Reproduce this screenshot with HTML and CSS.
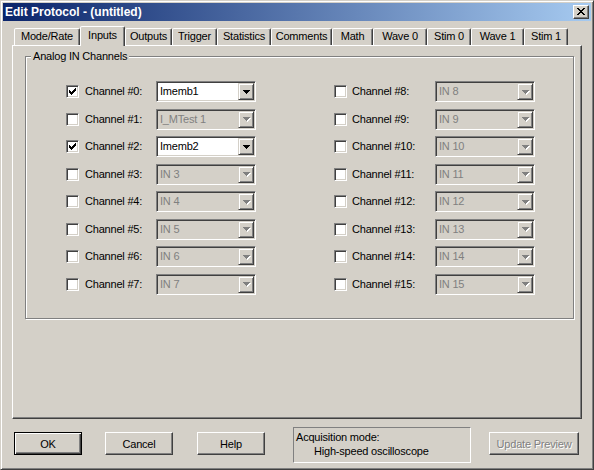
FILE: index.html
```html
<!DOCTYPE html>
<html>
<head>
<meta charset="utf-8">
<title>Edit Protocol</title>
<link rel="stylesheet" href="styles.css">
</head>
<body>
<div class="window">
  <div class="titlebar">
    <span class="title">Edit Protocol - (untitled)</span>
    <span class="close-btn"><svg width="8" height="7" viewBox="0 0 8 7" shape-rendering="crispEdges"><path d="M0 0h2v1h-2zM6 0h2v1h-2zM1 1h2v1h-2zM5 1h2v1h-2zM2 2h4v1h-4zM3 3h2v1h-2zM2 4h4v1h-4zM1 5h2v1h-2zM5 5h2v1h-2zM0 6h2v1h-2zM6 6h2v1h-2z" fill="#000"/></svg></span>
  </div>
  <div class="client">
    <div class="tabs">
      <div class="tab tab-mode">Mode/Rate</div>
      <div class="tab tab-inputs active">Inputs</div>
      <div class="tab tab-outputs">Outputs</div>
      <div class="tab tab-trigger">Trigger</div>
      <div class="tab tab-stats">Statistics</div>
      <div class="tab tab-comments">Comments</div>
      <div class="tab tab-math">Math</div>
      <div class="tab tab-wave0">Wave 0</div>
      <div class="tab tab-stim0">Stim 0</div>
      <div class="tab tab-wave1">Wave 1</div>
      <div class="tab tab-stim1">Stim 1</div>
    </div>
    <div class="panel">
      <div class="group">
        <div class="group-title">Analog IN Channels</div>
        <div class="channels">
          <div class="col col-left">
            <div class="row"><span class="cb"><svg width="7" height="7" viewBox="0 0 7 7" shape-rendering="crispEdges"><path d="M6 0h1v1h-1zM5 1h2v1h-2zM0 2h1v1h-1zM4 2h3v1h-3zM0 3h2v1h-2zM3 3h3v1h-3zM0 4h5v1h-5zM1 5h3v1h-3zM2 6h1v1h-1z" fill="#000"/></svg></span><span class="lbl">Channel #0:</span><span class="combo"><span class="combo-text">Imemb1</span><span class="combo-btn"><svg width="8" height="5" viewBox="0 0 8 5" shape-rendering="crispEdges"><path d="M0 0h7v1h-7zM1 1h5v1h-5zM2 2h3v1h-3zM3 3h1v1h-1z" fill="#000"/></svg></span></span></div>
            <div class="row"><span class="cb"></span><span class="lbl">Channel #1:</span><span class="combo disabled"><span class="combo-text">I_MTest 1</span><span class="combo-btn"><svg width="8" height="5" viewBox="0 0 8 5" shape-rendering="crispEdges"><path d="M1 1h7v1h-7zM2 2h5v1h-5zM3 3h3v1h-3zM4 4h1v1h-1z" fill="#fff"/><path d="M0 0h7v1h-7zM1 1h5v1h-5zM2 2h3v1h-3zM3 3h1v1h-1z" fill="#808080"/></svg></span></span></div>
            <div class="row"><span class="cb"><svg width="7" height="7" viewBox="0 0 7 7" shape-rendering="crispEdges"><path d="M6 0h1v1h-1zM5 1h2v1h-2zM0 2h1v1h-1zM4 2h3v1h-3zM0 3h2v1h-2zM3 3h3v1h-3zM0 4h5v1h-5zM1 5h3v1h-3zM2 6h1v1h-1z" fill="#000"/></svg></span><span class="lbl">Channel #2:</span><span class="combo"><span class="combo-text">Imemb2</span><span class="combo-btn"><svg width="8" height="5" viewBox="0 0 8 5" shape-rendering="crispEdges"><path d="M0 0h7v1h-7zM1 1h5v1h-5zM2 2h3v1h-3zM3 3h1v1h-1z" fill="#000"/></svg></span></span></div>
            <div class="row"><span class="cb"></span><span class="lbl">Channel #3:</span><span class="combo disabled"><span class="combo-text">IN 3</span><span class="combo-btn"><svg width="8" height="5" viewBox="0 0 8 5" shape-rendering="crispEdges"><path d="M1 1h7v1h-7zM2 2h5v1h-5zM3 3h3v1h-3zM4 4h1v1h-1z" fill="#fff"/><path d="M0 0h7v1h-7zM1 1h5v1h-5zM2 2h3v1h-3zM3 3h1v1h-1z" fill="#808080"/></svg></span></span></div>
            <div class="row"><span class="cb"></span><span class="lbl">Channel #4:</span><span class="combo disabled"><span class="combo-text">IN 4</span><span class="combo-btn"><svg width="8" height="5" viewBox="0 0 8 5" shape-rendering="crispEdges"><path d="M1 1h7v1h-7zM2 2h5v1h-5zM3 3h3v1h-3zM4 4h1v1h-1z" fill="#fff"/><path d="M0 0h7v1h-7zM1 1h5v1h-5zM2 2h3v1h-3zM3 3h1v1h-1z" fill="#808080"/></svg></span></span></div>
            <div class="row"><span class="cb"></span><span class="lbl">Channel #5:</span><span class="combo disabled"><span class="combo-text">IN 5</span><span class="combo-btn"><svg width="8" height="5" viewBox="0 0 8 5" shape-rendering="crispEdges"><path d="M1 1h7v1h-7zM2 2h5v1h-5zM3 3h3v1h-3zM4 4h1v1h-1z" fill="#fff"/><path d="M0 0h7v1h-7zM1 1h5v1h-5zM2 2h3v1h-3zM3 3h1v1h-1z" fill="#808080"/></svg></span></span></div>
            <div class="row"><span class="cb"></span><span class="lbl">Channel #6:</span><span class="combo disabled"><span class="combo-text">IN 6</span><span class="combo-btn"><svg width="8" height="5" viewBox="0 0 8 5" shape-rendering="crispEdges"><path d="M1 1h7v1h-7zM2 2h5v1h-5zM3 3h3v1h-3zM4 4h1v1h-1z" fill="#fff"/><path d="M0 0h7v1h-7zM1 1h5v1h-5zM2 2h3v1h-3zM3 3h1v1h-1z" fill="#808080"/></svg></span></span></div>
            <div class="row"><span class="cb"></span><span class="lbl">Channel #7:</span><span class="combo disabled"><span class="combo-text">IN 7</span><span class="combo-btn"><svg width="8" height="5" viewBox="0 0 8 5" shape-rendering="crispEdges"><path d="M1 1h7v1h-7zM2 2h5v1h-5zM3 3h3v1h-3zM4 4h1v1h-1z" fill="#fff"/><path d="M0 0h7v1h-7zM1 1h5v1h-5zM2 2h3v1h-3zM3 3h1v1h-1z" fill="#808080"/></svg></span></span></div>
          </div>
          <div class="col col-right">
            <div class="row"><span class="cb"></span><span class="lbl">Channel #8:</span><span class="combo disabled"><span class="combo-text">IN 8</span><span class="combo-btn"><svg width="8" height="5" viewBox="0 0 8 5" shape-rendering="crispEdges"><path d="M1 1h7v1h-7zM2 2h5v1h-5zM3 3h3v1h-3zM4 4h1v1h-1z" fill="#fff"/><path d="M0 0h7v1h-7zM1 1h5v1h-5zM2 2h3v1h-3zM3 3h1v1h-1z" fill="#808080"/></svg></span></span></div>
            <div class="row"><span class="cb"></span><span class="lbl">Channel #9:</span><span class="combo disabled"><span class="combo-text">IN 9</span><span class="combo-btn"><svg width="8" height="5" viewBox="0 0 8 5" shape-rendering="crispEdges"><path d="M1 1h7v1h-7zM2 2h5v1h-5zM3 3h3v1h-3zM4 4h1v1h-1z" fill="#fff"/><path d="M0 0h7v1h-7zM1 1h5v1h-5zM2 2h3v1h-3zM3 3h1v1h-1z" fill="#808080"/></svg></span></span></div>
            <div class="row"><span class="cb"></span><span class="lbl">Channel #10:</span><span class="combo disabled"><span class="combo-text">IN 10</span><span class="combo-btn"><svg width="8" height="5" viewBox="0 0 8 5" shape-rendering="crispEdges"><path d="M1 1h7v1h-7zM2 2h5v1h-5zM3 3h3v1h-3zM4 4h1v1h-1z" fill="#fff"/><path d="M0 0h7v1h-7zM1 1h5v1h-5zM2 2h3v1h-3zM3 3h1v1h-1z" fill="#808080"/></svg></span></span></div>
            <div class="row"><span class="cb"></span><span class="lbl">Channel #11:</span><span class="combo disabled"><span class="combo-text">IN 11</span><span class="combo-btn"><svg width="8" height="5" viewBox="0 0 8 5" shape-rendering="crispEdges"><path d="M1 1h7v1h-7zM2 2h5v1h-5zM3 3h3v1h-3zM4 4h1v1h-1z" fill="#fff"/><path d="M0 0h7v1h-7zM1 1h5v1h-5zM2 2h3v1h-3zM3 3h1v1h-1z" fill="#808080"/></svg></span></span></div>
            <div class="row"><span class="cb"></span><span class="lbl">Channel #12:</span><span class="combo disabled"><span class="combo-text">IN 12</span><span class="combo-btn"><svg width="8" height="5" viewBox="0 0 8 5" shape-rendering="crispEdges"><path d="M1 1h7v1h-7zM2 2h5v1h-5zM3 3h3v1h-3zM4 4h1v1h-1z" fill="#fff"/><path d="M0 0h7v1h-7zM1 1h5v1h-5zM2 2h3v1h-3zM3 3h1v1h-1z" fill="#808080"/></svg></span></span></div>
            <div class="row"><span class="cb"></span><span class="lbl">Channel #13:</span><span class="combo disabled"><span class="combo-text">IN 13</span><span class="combo-btn"><svg width="8" height="5" viewBox="0 0 8 5" shape-rendering="crispEdges"><path d="M1 1h7v1h-7zM2 2h5v1h-5zM3 3h3v1h-3zM4 4h1v1h-1z" fill="#fff"/><path d="M0 0h7v1h-7zM1 1h5v1h-5zM2 2h3v1h-3zM3 3h1v1h-1z" fill="#808080"/></svg></span></span></div>
            <div class="row"><span class="cb"></span><span class="lbl">Channel #14:</span><span class="combo disabled"><span class="combo-text">IN 14</span><span class="combo-btn"><svg width="8" height="5" viewBox="0 0 8 5" shape-rendering="crispEdges"><path d="M1 1h7v1h-7zM2 2h5v1h-5zM3 3h3v1h-3zM4 4h1v1h-1z" fill="#fff"/><path d="M0 0h7v1h-7zM1 1h5v1h-5zM2 2h3v1h-3zM3 3h1v1h-1z" fill="#808080"/></svg></span></span></div>
            <div class="row"><span class="cb"></span><span class="lbl">Channel #15:</span><span class="combo disabled"><span class="combo-text">IN 15</span><span class="combo-btn"><svg width="8" height="5" viewBox="0 0 8 5" shape-rendering="crispEdges"><path d="M1 1h7v1h-7zM2 2h5v1h-5zM3 3h3v1h-3zM4 4h1v1h-1z" fill="#fff"/><path d="M0 0h7v1h-7zM1 1h5v1h-5zM2 2h3v1h-3zM3 3h1v1h-1z" fill="#808080"/></svg></span></span></div>
          </div>
        </div>
      </div>
    </div>
    <div class="bottom">
      <div class="btn btn-default btn-ok">OK</div>
      <div class="btn btn-cancel">Cancel</div>
      <div class="btn btn-help">Help</div>
      <div class="acq">
        <div>Acquisition mode:</div>
        <div class="acq-value">High-speed oscilloscope</div>
      </div>
      <div class="btn btn-update disabled">Update Preview</div>
    </div>
  </div>
</div>
</body>
</html>
```

FILE: styles.css
```css
* { box-sizing: border-box; }
html, body { margin: 0; padding: 0; background: #D4D0C8; }
body {
  font-family: "Liberation Sans", Arial, sans-serif;
  font-size: 11px;
  letter-spacing: -0.2px;
  color: #000;
  width: 594px;
  height: 470px;
  overflow: hidden;
}
.window {
  width: 594px;
  height: 470px;
  background: #D4D0C8;
  border: 1px solid;
  border-color: #D4D0C8 #404040 #404040 #D4D0C8;
  box-shadow: inset 1px 1px #fff, inset -1px -1px #808080;
  padding: 2px;
  display: flex;
  flex-direction: column;
}
.titlebar {
  height: 18px;
  flex: none;
  display: flex;
  align-items: center;
  padding: 0 2px;
  background: linear-gradient(to right, #0A246A, #A6CAF0);
}
.title {
  color: #fff;
  font-weight: bold;
  font-size: 12px;
  letter-spacing: 0;
  line-height: 18px;
}
.close-btn {
  margin-left: auto;
  width: 16px;
  height: 14px;
  background: #D4D0C8;
  border: 1px solid;
  border-color: #fff #404040 #404040 #fff;
  box-shadow: inset -1px -1px #808080;
  display: flex;
  align-items: center;
  justify-content: center;
  padding: 0 1px 1px 0;
}
.close-btn svg { display: block; }
.client {
  flex: 1;
  padding: 0 9px;
  display: flex;
  flex-direction: column;
}
.tabs {
  display: flex;
  align-items: flex-end;
  height: 19px;
  margin-top: 5px;
  padding-left: 2px;
  flex: none;
}
.tab {
  height: 17px;
  border: 1px solid;
  border-bottom: none;
  border-color: #fff #404040 transparent #fff;
  border-radius: 2px 2px 0 0;
  box-shadow: inset -1px 0 #808080;
  text-align: center;
  line-height: 15px;
  white-space: nowrap;
  background: #D4D0C8;
}
.tab.active {
  height: 20px;
  margin-bottom: -1px;
  line-height: 16px;
  position: relative;
  z-index: 1;
}
.tab-mode { width: 66px; }
.tab-inputs { width: 45px; }
.tab-outputs { width: 47px; }
.tab-trigger { width: 45px; }
.tab-stats { width: 54px; }
.tab-comments { width: 61px; }
.tab-math { width: 41px; }
.tab-wave0 { width: 54px; }
.tab-stim0 { width: 44px; }
.tab-wave1 { width: 53px; }
.tab-stim1 { width: 44px; }

.panel {
  flex: none;
  height: 374px;
  border: 1px solid;
  border-color: #fff #404040 #404040 #fff;
  box-shadow: inset -1px -1px #808080;
  padding: 10px 0 0 12px;
}
.group {
  width: 549px;
  height: 263px;
  border: 1px solid #808080;
  box-shadow: inset 1px 1px #fff, 1px 1px #fff;
}
.group-title {
  width: fit-content;
  margin: -7px 0 0 5px;
  padding: 0 2px;
  line-height: 13px;
  background: #D4D0C8;
}
.channels {
  display: flex;
  margin-top: 18px;
  padding-left: 40px;
}
.col {
  display: flex;
  flex-direction: column;
  gap: 6.5px;
}
.col-right { margin-left: 78px; }
.row {
  display: flex;
  align-items: center;
  height: 21px;
}
.cb {
  width: 13px;
  height: 13px;
  flex: none;
  background: #fff;
  border: 1px solid;
  border-color: #808080 #fff #fff #808080;
  box-shadow: inset 1px 1px #404040, inset -1px -1px #D4D0C8;
  padding: 2px;
}
.cb svg { display: block; }
.lbl {
  white-space: nowrap;
  line-height: 13px;
}
.col-left .lbl { width: 71px; margin-left: 6px; }
.col-right .lbl { width: 83px; margin-left: 5px; }
.combo {
  width: 100px;
  height: 21px;
  flex: none;
  display: flex;
  background: #fff;
  border: 1px solid;
  border-color: #808080 #fff #fff #808080;
  box-shadow: inset 1px 1px #404040, inset -1px -1px #D4D0C8;
  padding: 1px;
}
.combo.disabled { background: #D4D0C8; }
.combo-text {
  flex: 1;
  padding-left: 2px;
  line-height: 17px;
  white-space: nowrap;
  overflow: hidden;
}
.combo.disabled .combo-text { color: #808080; }
.combo-btn {
  width: 16px;
  height: 17px;
  flex: none;
  background: #D4D0C8;
  border: 1px solid;
  border-color: #D4D0C8 #404040 #404040 #D4D0C8;
  box-shadow: inset 1px 1px #fff, inset -1px -1px #808080;
  display: flex;
  align-items: center;
  justify-content: center;
  padding: 1px 0 0 2px;
}
.combo-btn svg { display: block; }

.bottom {
  display: flex;
  align-items: flex-start;
  margin-top: 8px;
  padding-left: 2px;
}
.btn {
  width: 68px;
  height: 23px;
  margin-top: 5px;
  background: #D4D0C8;
  border: 1px solid;
  border-color: #fff #404040 #404040 #fff;
  box-shadow: inset -1px -1px #808080;
  display: flex;
  align-items: center;
  justify-content: center;
  white-space: nowrap;
}
.btn-default {
  border: 1px solid #000;
  box-shadow: inset 1px 1px #fff, inset -1px -1px #404040, inset -2px -2px #808080;
}
.btn-cancel { margin-left: 23px; }
.btn-help { margin-left: 24px; }
.acq {
  width: 178px;
  height: 36px;
  margin-left: 28px;
  border: 1px solid;
  border-color: #808080 #fff #fff #808080;
  padding: 2px 0 0 2px;
  line-height: 14px;
}
.acq-value { padding-left: 18px; }
.btn-update {
  width: 90px;
  margin-left: 18px;
}
.btn.disabled {
  color: #808080;
  text-shadow: 1px 1px #fff;
}
```
